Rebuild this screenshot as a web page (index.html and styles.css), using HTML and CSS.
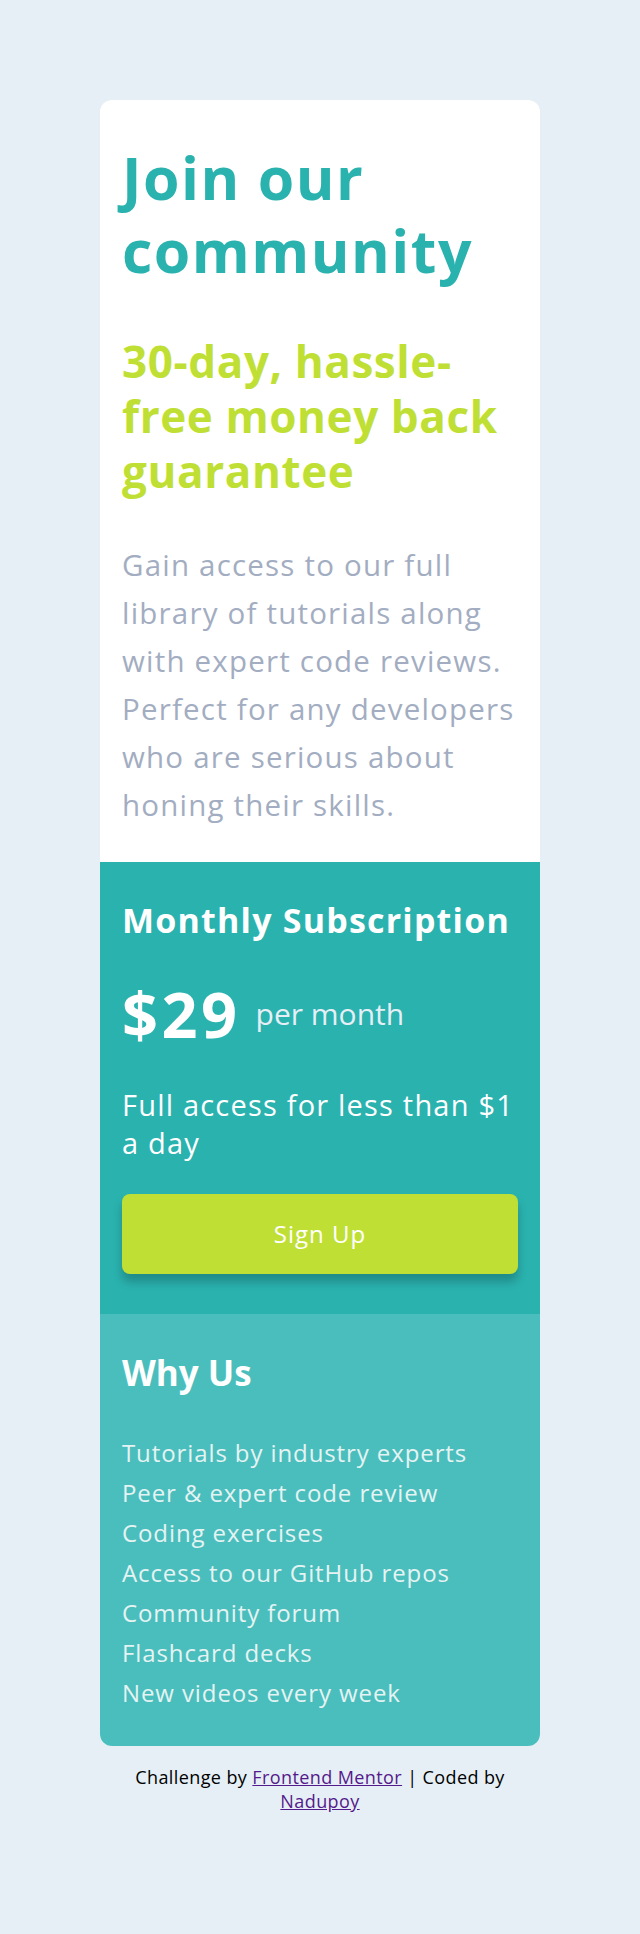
FILE: index.html
```html
<!DOCTYPE html>
<html lang="en">
<head>
<meta charset="UTF-8">
<title>Single price grid</title>
<link rel="stylesheet" href="styles.css">
</head>
<body>
<main class="page">
  <section class="card">
    <div class="intro">
      <h1 class="intro-title">Join our community</h1>
      <h2 class="intro-sub">30-day, hassle-free money back guarantee</h2>
      <p class="intro-text">Gain access to our full library of tutorials along with expert code reviews. Perfect for any developers who are serious about honing their skills.</p>
    </div>
    <div class="subscription">
      <h3 class="sub-title">Monthly Subscription</h3>
      <div class="price-row">
        <span class="price">$29</span>
        <span class="per">per month</span>
      </div>
      <p class="sub-text">Full access for less than $1 a day</p>
      <button class="signup">Sign Up</button>
    </div>
    <div class="why">
      <h3 class="why-title">Why Us</h3>
      <ul class="why-list">
        <li>Tutorials by industry experts</li>
        <li>Peer &amp; expert code review</li>
        <li>Coding exercises</li>
        <li>Access to our GitHub repos</li>
        <li>Community forum</li>
        <li>Flashcard decks</li>
        <li>New videos every week</li>
      </ul>
    </div>
  </section>
  <footer class="attribution">
    Challenge by <a href="#">Frontend Mentor</a> | Coded by <a href="#">Nadupoy</a>
  </footer>
</main>
</body>
</html>
```
FILE: styles.css
```css
* { box-sizing: border-box; }
html, body { margin: 0; padding: 0; }
body {
  background: #e5eff5;
  font-family: "Open Sans", "Noto Sans", sans-serif;
  min-height: 1934px;
}
.page {
  display: flex;
  flex-direction: column;
  align-items: center;
  padding-top: 100px;
}
.card {
  width: 440px;
  border-radius: 12px;
  overflow: hidden;
  background: #fff;
}
.intro {
  padding: 41px 22px 33px;
}
.intro-title {
  margin: 0;
  font-size: 59px;
  line-height: 73px;
  font-weight: 700;
  letter-spacing: 1.5px;
  color: #2ab2af;
}
.intro-sub {
  margin: 47px 0 0;
  font-size: 44px;
  line-height: 55px;
  font-weight: 700;
  letter-spacing: 0.6px;
  color: #c0df34;
}
.intro-text {
  margin: 42px 0 0;
  font-size: 29.5px;
  line-height: 48px;
  letter-spacing: 1.2px;
  color: #a3adc1;
}
.subscription {
  background: #2ab2af;
  padding: 38px 22px 40px;
  color: #fff;
}
.sub-title {
  margin: 0;
  font-size: 34px;
  line-height: 40px;
  font-weight: 700;
  letter-spacing: 1.2px;
}
.price-row {
  margin-top: 44px;
  display: flex;
  align-items: center;
  gap: 15px;
  height: 60px;
}
.price {
  font-size: 63px;
  line-height: 60px;
  font-weight: 700;
  letter-spacing: 3.5px;
}
.per {
  font-size: 30px;
  line-height: 60px;
  color: #e5eff5;
}
.sub-text {
  margin: 42px 0 0;
  font-size: 29px;
  line-height: 38px;
  letter-spacing: 1.2px;
}
.signup {
  display: block;
  width: 100%;
  margin-top: 32px;
  height: 80px;
  border: none;
  border-radius: 8px;
  background: #c0df34;
  color: #fff;
  font-family: inherit;
  font-size: 24px;
  line-height: 80px;
  letter-spacing: 1px;
  padding: 0;
  box-shadow: 0 8px 10px rgba(0, 0, 0, 0.22);
}
.why {
  background: #4abebd;
  padding: 38px 22px 33px;
  color: #fff;
}
.why-title {
  margin: 0;
  font-size: 35px;
  line-height: 42px;
  font-weight: 700;
}
.why-list {
  list-style: none;
  margin: 39px 0 0;
  padding: 0;
  font-size: 24px;
  line-height: 40px;
  letter-spacing: 0.9px;
  color: #e5f3f3;
}
.attribution {
  margin-top: 19px;
  max-width: 400px;
  text-align: center;
  font-size: 18px;
  line-height: 24px;
  letter-spacing: 0.4px;
  color: #000;
}
.attribution a {
  color: #551a8b;
}
```
